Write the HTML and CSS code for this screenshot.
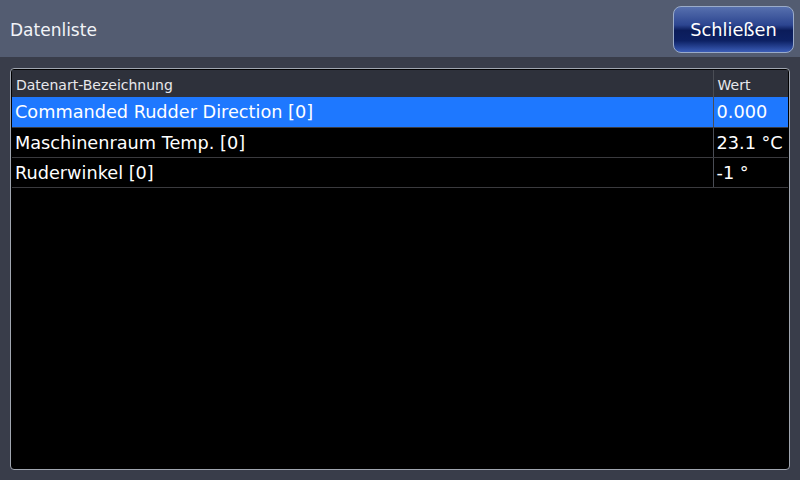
FILE: index.html
```html
<!DOCTYPE html>
<html lang="de">
<head>
    <meta charset="UTF-8">
    <title>Datenliste</title>
    <link rel="stylesheet" href="styles.css">
</head>
<body>
    <header class="topbar">
        <h1 class="title">Datenliste</h1>
        <button class="close-btn">Schließen</button>
    </header>
    <main class="content">
        <div class="panel">
            <table class="datalist">
                <thead>
                    <tr>
                        <th class="col-name">Datenart-Bezeichnung</th>
                        <th class="col-value">Wert</th>
                    </tr>
                </thead>
                <tbody>
                    <tr class="selected">
                        <td>Commanded Rudder Direction [0]</td>
                        <td>0.000</td>
                    </tr>
                    <tr>
                        <td>Maschinenraum Temp. [0]</td>
                        <td>23.1 °C</td>
                    </tr>
                    <tr>
                        <td>Ruderwinkel [0]</td>
                        <td>-1 °</td>
                    </tr>
                </tbody>
            </table>
        </div>
    </main>
</body>
</html>
```

FILE: styles.css
```css
* {
    margin: 0;
    padding: 0;
    box-sizing: border-box;
    font-family: 'DejaVu Sans', sans-serif;
}
html, body {
    width: 800px;
    height: 480px;
    overflow: hidden;
}
body {
    background-color: #393d4a;
    color: #ffffff;
    display: flex;
    flex-direction: column;
}
.topbar {
    height: 57px;
    background: #535c71;
    display: flex;
    align-items: center;
    justify-content: space-between;
    padding: 0 6px 0 10px;
}
.title {
    font-size: 17px;
    font-weight: normal;
    color: #f2f4f8;
    padding-top: 2px;
}
.close-btn {
    width: 121px;
    height: 47px;
    margin-top: 1px;
    border: 1px solid #9aabc9;
    border-radius: 8px;
    color: #ffffff;
    font-size: 17.8px;
    background: linear-gradient(to bottom, #5770ae 0%, #2c4590 40%, #0b1c5a 52%, #0d2164 75%, #3b5db8 100%);
    cursor: pointer;
}
.content {
    flex: 1;
    padding: 11px 10px 10px 10px;
    display: flex;
}
.panel {
    flex: 1;
    background: #000000;
    border: 1px solid #a0a6b0;
    border-radius: 4px;
    padding: 1px 1px 0 1px;
}
.datalist {
    width: 100%;
    border-collapse: collapse;
}
.datalist th {
    height: 27px;
    background: #2e313b;
    font-size: 14px;
    font-weight: normal;
    text-align: left;
    padding: 3px 0 0 4px;
    color: #e8e8ec;
}
.datalist td {
    height: 30px;
    font-size: 17.7px;
    padding: 1px 0 0 3px;
    border-bottom: 1px solid #3a3a3e;
}
.datalist .col-value,
.datalist td + td {
    width: 75px;
    border-left: 1px solid #4a4d55;
}
.datalist .selected td {
    background: #1e78ff;
}
```
